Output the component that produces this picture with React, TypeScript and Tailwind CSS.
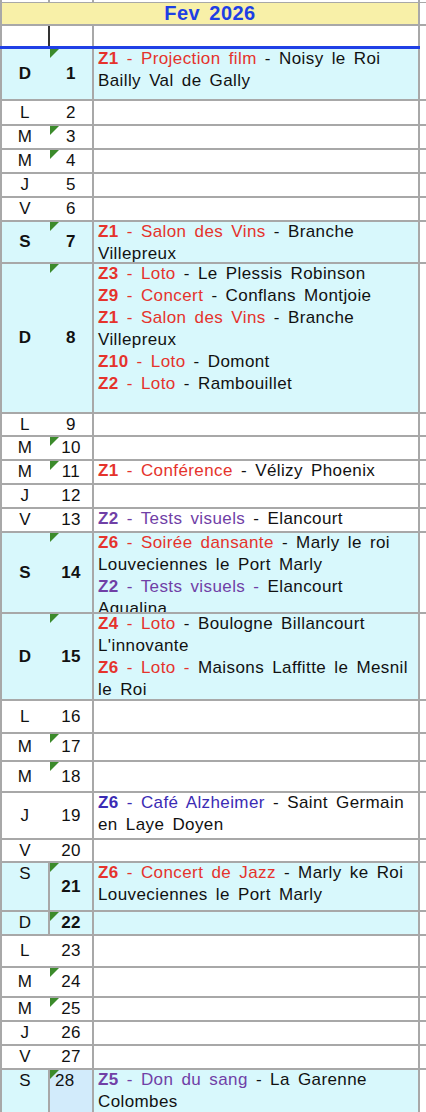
import React from "react";

type Seg = { t: string; c?: string; b?: boolean };
type Line = Seg[];

const RED = "text-[#e5332c]";
const PUR = "text-[#7040a6]";
const BLU = "text-[#3b2bb4]";

function ev(z: string, title: string, place: string, color: string, dashColored = false): Line {
  return [
    { t: z, c: color, b: true },
    { t: " - " + title, c: color },
    { t: " - ", c: dashColored ? color : undefined },
    { t: place },
  ];
}
const plain = (t: string): Line => [{ t }];

type RowData = {
  h: string;
  d: string;
  n: string;
  cy?: boolean;
  db?: boolean;
  nb?: boolean;
  tri?: boolean;
  dayTop?: boolean;
  numTop?: boolean;
  sep?: boolean;
  numBg?: boolean;
  lines?: Line[];
};

const rows: RowData[] = [
  { h: "h-[52px]", d: "D", n: "1", cy: true, db: true, nb: true, tri: true, lines: [ev("Z1", "Projection film", "Noisy le Roi", RED), plain("Bailly Val de Gally")] },
  { h: "h-[25px]", d: "L", n: "2" },
  { h: "h-[24px]", d: "M", n: "3", tri: true },
  { h: "h-[24px]", d: "M", n: "4", tri: true },
  { h: "h-[24px]", d: "J", n: "5" },
  { h: "h-[24px]", d: "V", n: "6" },
  { h: "h-[42px]", d: "S", n: "7", cy: true, db: true, nb: true, tri: true, lines: [ev("Z1", "Salon des Vins", "Branche", RED), plain("Villepreux")] },
  {
    h: "h-[150px]", d: "D", n: "8", cy: true, db: true, nb: true, tri: true,
    lines: [
      ev("Z3", "Loto", "Le Plessis Robinson", RED),
      ev("Z9", "Concert", "Conflans Montjoie", RED),
      ev("Z1", "Salon des Vins", "Branche", RED),
      plain("Villepreux"),
      ev("Z10", "Loto", "Domont", RED),
      ev("Z2", "Loto", "Rambouillet", RED),
    ],
  },
  { h: "h-[23px]", d: "L", n: "9" },
  { h: "h-[24px]", d: "M", n: "10", tri: true },
  { h: "h-[24px]", d: "M", n: "11", tri: true, lines: [ev("Z1", "Conférence", "Vélizy Phoenix", RED)] },
  { h: "h-[24px]", d: "J", n: "12" },
  { h: "h-[24px]", d: "V", n: "13", lines: [ev("Z2", "Tests visuels", "Elancourt", PUR)] },
  {
    h: "h-[81px]", d: "S", n: "14", cy: true, db: true, nb: true, tri: true,
    lines: [
      ev("Z6", "Soirée dansante", "Marly le roi", RED),
      plain("Louveciennes le Port Marly"),
      ev("Z2", "Tests visuels", "Elancourt", PUR, true),
      plain("Aqualina"),
    ],
  },
  {
    h: "h-[87px]", d: "D", n: "15", cy: true, db: true, nb: true, tri: true,
    lines: [
      ev("Z4", "Loto", "Boulogne Billancourt", RED),
      plain("L'innovante"),
      ev("Z6", "Loto", "Maisons Laffitte le Mesnil", RED, true),
      plain("le Roi"),
    ],
  },
  { h: "h-[33px]", d: "L", n: "16" },
  { h: "h-[28px]", d: "M", n: "17", tri: true },
  { h: "h-[31px]", d: "M", n: "18", tri: true },
  { h: "h-[47px]", d: "J", n: "19", lines: [ev("Z6", "Café Alzheimer", "Saint Germain", BLU), plain("en Laye Doyen")] },
  { h: "h-[23px]", d: "V", n: "20" },
  { h: "h-[49px]", d: "S", n: "21", cy: true, nb: true, dayTop: true, sep: true, tri: true, lines: [ev("Z6", "Concert de Jazz", "Marly ke Roi", RED), plain("Louveciennes le Port Marly")] },
  { h: "h-[24px]", d: "D", n: "22", cy: true, nb: true, sep: true, tri: true },
  { h: "h-[32px]", d: "L", n: "23" },
  { h: "h-[30px]", d: "M", n: "24", tri: true },
  { h: "h-[24px]", d: "M", n: "25", tri: true },
  { h: "h-[24px]", d: "J", n: "26" },
  { h: "h-[24px]", d: "V", n: "27" },
  { h: "h-[60px]", d: "S", n: "28", cy: true, dayTop: true, numTop: true, sep: true, tri: true, numBg: true, lines: [ev("Z5", "Don du sang", "La Garenne", PUR), plain("Colombes")] },
];

function Tri() {
  return (
    <svg className="absolute left-0 top-0" width="9" height="9" viewBox="0 0 9 9">
      <polygon points="0,0 9,0 0,9" fill="#3b8a2b" />
    </svg>
  );
}

function Row({ r }: { r: RowData }) {
  const bg = r.cy ? "bg-[#d8f8fc]" : "bg-white";
  return (
    <div className={`flex w-[426px] border-b-2 border-[#a8a8a8] ${r.h}`}>
      <div
        className={`w-[48px] shrink-0 border-l-2 border-[#a8a8a8] ${bg} flex justify-center ${
          r.dayTop ? "items-start" : "items-center"
        } ${r.db ? "font-bold" : ""}`}
      >
        <span className="leading-[22px]">{r.d}</span>
      </div>
      <div
        className={`relative w-[44px] shrink-0 border-l-2 ${r.sep ? "border-[#a8a8a8]" : "border-transparent"} ${
          r.numBg ? "bg-[#d2ebfb]" : bg
        } flex ${r.numTop ? "items-start justify-start pl-[5px]" : "items-center justify-center"} ${
          r.nb ? "font-bold" : ""
        }`}
      >
        {r.tri && <Tri />}
        <span className="leading-[22px]">{r.n}</span>
      </div>
      <div className={`w-[328px] shrink-0 border-l-2 border-r-2 border-[#a8a8a8] ${bg} pl-[4px] overflow-hidden`}>
        {r.lines && (
          <div className="-mt-px">
            {r.lines.map((ln, i) => (
              <div key={i} className="whitespace-pre leading-[22px] text-[#111111]">
                {ln.map((s, j) => (
                  <span key={j} className={`${s.c ?? ""} ${s.b ? "font-bold" : ""}`}>
                    {s.t}
                  </span>
                ))}
              </div>
            ))}
          </div>
        )}
      </div>
      <div className="w-[6px] shrink-0 bg-white" />
    </div>
  );
}

export default function App() {
  return (
    <div className="w-[426px] h-[1112px] overflow-hidden bg-white text-[#111111] font-['Liberation_Sans',Arial,sans-serif] text-[17px] tracking-[0.4px] [word-spacing:3px]">
      {/* top strip */}
      <div className="flex h-[2px] w-[426px]">
        <div className="w-[48px] border-l-2 border-[#a8a8a8]" />
        <div className="w-[44px] border-l-2 border-[#a8a8a8]" />
        <div className="w-[328px] border-l-2 border-r-2 border-[#a8a8a8]" />
        <div className="w-[6px]" />
      </div>
      {/* header */}
      <div className="flex h-[24px] w-[426px] border-t border-b-2 border-[#a8a8a8]">
        <div className="w-[420px] border-l-2 border-r-2 border-[#a8a8a8] bg-[#f8f0a8] flex items-center justify-center">
          <span className="text-[20px] font-bold text-[#1e3fe4] tracking-[0.5px] leading-[21px]">Fev 2026</span>
        </div>
        <div className="w-[6px] bg-white" />
      </div>
      {/* frozen blank row */}
      <div className="flex h-[20px] w-[426px]">
        <div className="w-[48px] border-l-2 border-[#a8a8a8]" />
        <div className="w-[44px] border-l-2 border-[#333333]" />
        <div className="w-[328px] border-l-2 border-r-2 border-[#a8a8a8]" />
        <div className="w-[6px]" />
      </div>
      <div className="flex h-[3px] w-[426px]">
        <div className="w-[420px] bg-[#1f40e6]" />
        <div className="w-[6px] bg-white" />
      </div>
      {rows.map((r, i) => (
        <Row key={i} r={r} />
      ))}
    </div>
  );
}
